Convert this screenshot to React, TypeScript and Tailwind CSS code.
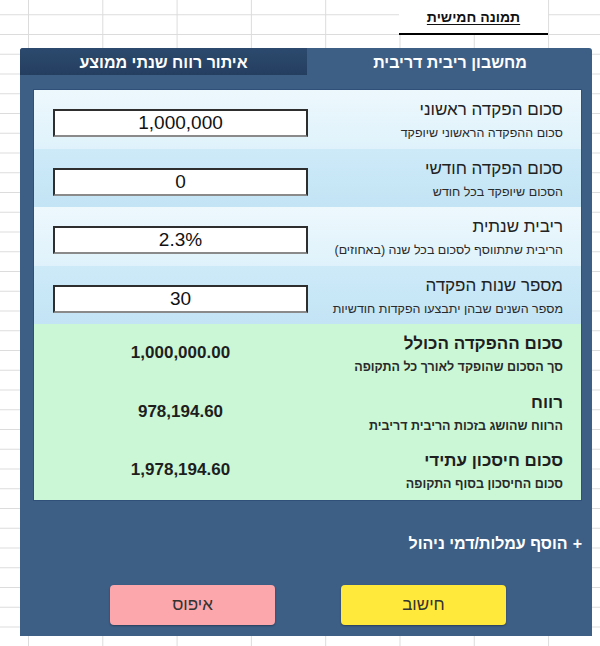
export default function App() {
  const inputRows = [
    { label: "סכום הפקדה ראשוני", sub: "סכום ההפקדה הראשוני שיופקד", value: "1,000,000", h: "h-[59px]", bg: "bg-linear-to-b from-[#edf8fd] to-[#dff2fb]" },
    { label: "סכום הפקדה חודשי", sub: "הסכום שיופקד בכל חודש", value: "0", h: "h-[58px]", bg: "bg-linear-to-b from-[#cdeaf8] to-[#c3e4f5]" },
    { label: "ריבית שנתית", sub: "הריבית שתתווסף לסכום בכל שנה (באחוזים)", value: "2.3%", h: "h-[59px]", bg: "bg-linear-to-b from-[#edf8fd] to-[#dff2fb]" },
    { label: "מספר שנות הפקדה", sub: "מספר השנים שבהן יתבצעו הפקדות חודשיות", value: "30", h: "h-[58px]", bg: "bg-linear-to-b from-[#cdeaf8] to-[#c3e4f5]" },
  ];
  const resultRows = [
    { label: "סכום ההפקדה הכולל", sub: "סך הסכום שהופקד לאורך כל התקופה", value: "1,000,000.00", h: "h-[59px]" },
    { label: "רווח", sub: "הרווח שהושג בזכות הריבית דריבית", value: "978,194.60", h: "h-[58px]" },
    { label: "סכום חיסכון עתידי", sub: "סכום החיסכון בסוף התקופה", value: "1,978,194.60", h: "h-[59px]" },
  ];

  return (
    <div className="w-[600px] h-[646px] overflow-hidden bg-white bg-[linear-gradient(to_right,#dcdcdc_1px,transparent_1px),linear-gradient(to_bottom,#dcdcdc_1px,transparent_1px)] bg-[size:74.3px_19.75px] bg-[position:28px_14.25px] font-['Liberation_Sans',Arial,sans-serif] text-[#1e1e1e]">
      <div className="flex justify-end pr-[52px]">
        <div dir="rtl" className="w-[149px] h-[35px] bg-white border-b-2 border-black flex items-center justify-center pt-[1px]">
          <span className="text-[14px] font-bold underline underline-offset-2 text-[#111]">תמונה חמישית</span>
        </div>
      </div>

      <div dir="rtl" className="ml-[20px] mr-[8px] mt-[13px] h-[588px] bg-[#3d5f86] rounded-t-[3px] flex flex-col">
        <div className="flex h-[30px] items-start">
          <div className="w-[284px] h-[30px] flex items-center justify-center text-white font-bold text-[16px]">
            מחשבון ריבית דריבית
          </div>
          <div className="w-[287px] mr-[1px] h-[27px] rounded-tl-[3px] bg-linear-to-b from-[#2c4a6e] to-[#243e60] flex items-center justify-center text-white font-bold text-[16px] pt-[2px]">
            איתור רווח שנתי ממוצע
          </div>
        </div>

        <div className="mt-[11px] mr-[10px] ml-[13px] border border-[#30507a] flex flex-col">
          {inputRows.map((r) => (
            <div key={r.label} className={`${r.h} ${r.bg} flex items-start justify-between pr-[18px] pl-[19px]`}>
              <div className="pt-[10px]">
                <div className="text-[17px] leading-[20px] text-[#222]">{r.label}</div>
                <div className="text-[12.5px] leading-[16px] mt-[5px] text-[#2a2a2a]">{r.sub}</div>
              </div>
              <div className="mt-[19px] w-[255px] h-[28px] bg-white border-2 border-[#2e2e2e] border-b-[#8a8a8a] flex items-center justify-center text-[19px] text-[#111]">
                {r.value}
              </div>
            </div>
          ))}
          <div className="bg-[#cbf7d6] flex flex-col">
            {resultRows.map((r) => (
              <div key={r.label} className={`${r.h} flex items-start justify-between pr-[18px] pl-[19px]`}>
                <div className="pt-[10px]">
                  <div className="text-[17px] leading-[20px] font-bold text-[#1e1e1e]">{r.label}</div>
                  <div className="text-[12.5px] leading-[16px] mt-[5px] font-bold text-[#2a2a2a]">{r.sub}</div>
                </div>
                <div className="mt-[19px] w-[255px] leading-[20px] text-center text-[17px] font-bold text-[#1e1e1e]">
                  {r.value}
                </div>
              </div>
            ))}
          </div>
        </div>

        <div className="mt-[33px] mr-[10px] h-[20px] flex items-center gap-[5px] text-[16px] font-bold text-white">
          <span>+</span>
          <span>הוסף עמלות/דמי ניהול</span>
        </div>

        <div className="mt-[31px] flex justify-center gap-[66px] pl-[4px]">
          <div className="w-[165px] h-[40px] rounded-[4px] bg-[#ffe93a] shadow-[0_1px_2px_rgba(0,0,0,0.35)] flex items-center justify-center text-[17px] text-[#333]">
            חישוב
          </div>
          <div className="w-[165px] h-[40px] rounded-[4px] bg-[#fba7ab] shadow-[0_1px_2px_rgba(0,0,0,0.35)] flex items-center justify-center text-[17px] text-[#333]">
            איפוס
          </div>
        </div>
      </div>
    </div>
  );
}
